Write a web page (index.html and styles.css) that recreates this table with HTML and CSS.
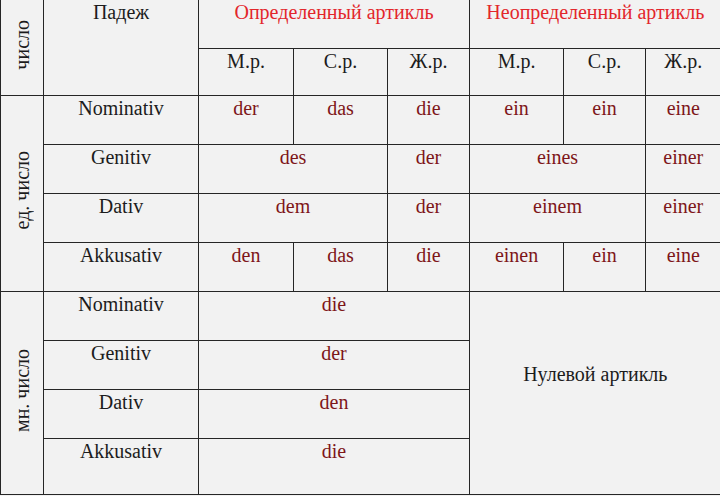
FILE: index.html
```html
<!DOCTYPE html>
<html lang="ru">
<head>
<meta charset="utf-8">
<title>Артикли</title>
<link rel="stylesheet" href="styles.css">
</head>
<body>
<table class="grid">
  <colgroup>
    <col class="c-num"><col class="c-case"><col class="c-a"><col class="c-b"><col class="c-c"><col class="c-b"><col class="c-c"><col class="c-last">
  </colgroup>
  <tr class="h1">
    <td rowspan="2" class="side"><span class="vert">число</span></td>
    <td rowspan="2" class="plain">Падеж</td>
    <td colspan="3" class="head">Определенный артикль</td>
    <td colspan="3" class="head">Неопределенный артикль</td>
  </tr>
  <tr class="h2">
    <td class="plain">М.р.</td><td class="plain">С.р.</td><td class="plain">Ж.р.</td>
    <td class="plain">М.р.</td><td class="plain">С.р.</td><td class="plain">Ж.р.</td>
  </tr>
  <tr class="r">
    <td rowspan="4" class="side"><span class="vert">ед. число</span></td>
    <td class="plain">Nominativ</td>
    <td class="art">der</td><td class="art">das</td><td class="art">die</td>
    <td class="art">ein</td><td class="art">ein</td><td class="art">eine</td>
  </tr>
  <tr class="r">
    <td class="plain">Genitiv</td>
    <td colspan="2" class="art">des</td><td class="art">der</td>
    <td colspan="2" class="art">eines</td><td class="art">einer</td>
  </tr>
  <tr class="r">
    <td class="plain">Dativ</td>
    <td colspan="2" class="art">dem</td><td class="art">der</td>
    <td colspan="2" class="art">einem</td><td class="art">einer</td>
  </tr>
  <tr class="r">
    <td class="plain">Akkusativ</td>
    <td class="art">den</td><td class="art">das</td><td class="art">die</td>
    <td class="art">einen</td><td class="art">ein</td><td class="art">eine</td>
  </tr>
  <tr class="r">
    <td rowspan="4" class="side"><span class="vert">мн. число</span></td>
    <td class="plain">Nominativ</td>
    <td colspan="3" class="art">die</td>
    <td colspan="3" rowspan="4" class="zero">Нулевой артикль</td>
  </tr>
  <tr class="r">
    <td class="plain">Genitiv</td>
    <td colspan="3" class="art">der</td>
  </tr>
  <tr class="r">
    <td class="plain">Dativ</td>
    <td colspan="3" class="art">den</td>
  </tr>
  <tr class="r-last">
    <td class="plain">Akkusativ</td>
    <td colspan="3" class="art">die</td>
  </tr>
</table>
</body>
</html>
```

FILE: styles.css
```css
html, body {
  margin: 0;
  padding: 0;
  background: #f2f2f2;
  font-family: "Liberation Serif", "Times New Roman", serif;
}

.grid {
  border-collapse: collapse;
  table-layout: fixed;
  width: 720px;
  font-family: "Liberation Serif", "Times New Roman", serif;
  font-size: 20px;
  color: #1c1c1c;
  background: #f2f2f2;
}

.c-num { width: 43px; }
.c-case { width: 155px; }
.c-a { width: 95px; }
.c-b { width: 94px; }
.c-c { width: 82px; }
.c-last { width: 75px; }

.grid td {
  border: 1px solid #262626;
  padding: 1px 0 0;
  text-align: center;
  vertical-align: top;
  line-height: 23px;
}

.grid tr:first-child td { border-top: none; }
.grid td:last-child { border-right: none; }

.h1 { height: 48px; }
.h2 { height: 47px; }
.r { height: 49px; }
.r-last { height: 56px; }

.head {
  color: #e3262b;
}

.art {
  color: #7e1619;
}

.side {
  vertical-align: middle !important;
  padding: 0 !important;
}

.vert {
  display: inline-block;
  writing-mode: vertical-rl;
  transform: rotate(180deg);
  line-height: 23px;
}

.zero {
  vertical-align: middle !important;
  padding: 0 0 36px !important;
}
```
